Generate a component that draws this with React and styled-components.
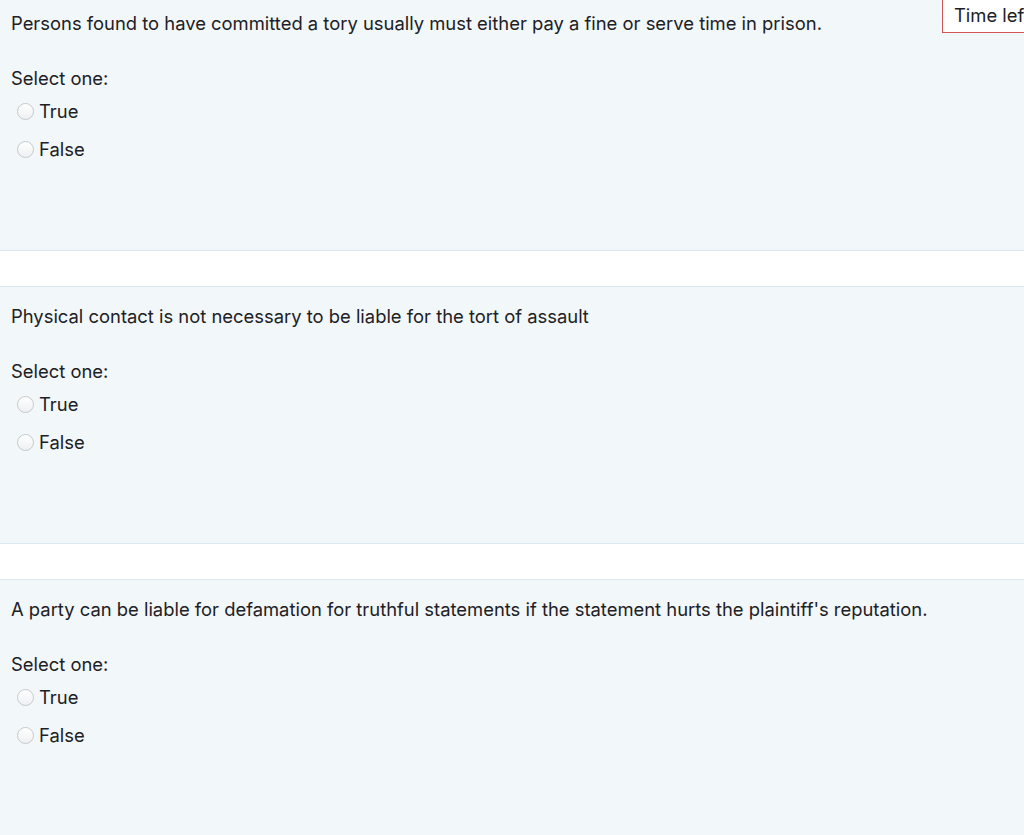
import React from "react";
import styled, { createGlobalStyle } from "styled-components";

const Global = createGlobalStyle`
  html, body { margin: 0; padding: 0; background: #ffffff; }
  body {
    font-family: Inter, "Open Sans", "Liberation Sans", sans-serif;
    color: #1d2125;
    overflow: hidden;
  }
`;

const Page = styled.div`
  margin-top: -7px;
  display: flex;
  flex-direction: column;
  gap: 35px;
`;

const Panel = styled.section`
  box-sizing: border-box;
  height: 258px;
  background: #f2f7fa;
  border-top: 1px solid #dbe8ef;
  border-bottom: 1px solid #dbe8ef;
  padding: 16px 11px 0;
  display: flex;
  flex-direction: column;
`;

const QText = styled.div`
  font-size: 18.4px;
  line-height: 27px;
  white-space: nowrap;
`;

const Prompt = styled.div`
  font-size: 18.4px;
  line-height: 27px;
  margin-top: 28px;
  margin-bottom: 6px;
`;

const Options = styled.div`
  display: flex;
  flex-direction: column;
  gap: 11px;
`;

const Option = styled.label`
  display: flex;
  align-items: center;
  font-size: 18.4px;
  line-height: 27px;
`;

const Radio = styled.span`
  box-sizing: border-box;
  width: 17px;
  height: 17px;
  border-radius: 50%;
  border: 1px solid #c4c9cd;
  background: linear-gradient(#ffffff, #eef0f2);
  margin-left: 6px;
  margin-right: 5px;
  flex: none;
`;

const Timer = styled.div`
  position: fixed;
  top: -2px;
  left: 942px;
  width: 160px;
  height: 35px;
  box-sizing: border-box;
  background: #ffffff;
  border: 1px solid #d25557;
  padding: 3px 0 0 11px;
  font-size: 18.4px;
  line-height: 27px;
  white-space: nowrap;
  overflow: hidden;
`;

const questions = [
  "Persons found to have committed a tory usually must either pay a fine or serve time in prison.",
  "Physical contact is not necessary to be liable for the tort of assault",
  "A party can be liable for defamation for truthful statements if the statement hurts the plaintiff's reputation.",
];

export default function App() {
  return (
    <>
      <Global />
      <Page>
        {questions.map((q, i) => (
          <Panel key={i}>
            <QText>{q}</QText>
            <Prompt>Select one:</Prompt>
            <Options>
              <Option>
                <Radio />
                True
              </Option>
              <Option>
                <Radio />
                False
              </Option>
            </Options>
          </Panel>
        ))}
      </Page>
      <Timer>Time left</Timer>
    </>
  );
}
